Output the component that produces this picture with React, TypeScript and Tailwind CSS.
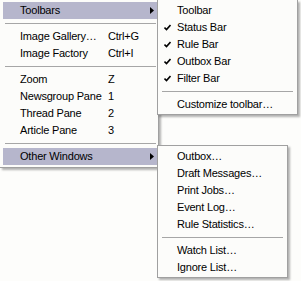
import React from 'react';

type Entry =
	| { kind: 'item'; label: string; shortcut?: string; checked?: boolean; submenu?: boolean; active?: boolean }
	| { kind: 'sep' };

const mainItems: Entry[] = [
	{ kind: 'item', label: 'Toolbars', submenu: true, active: true },
	{ kind: 'sep' },
	{ kind: 'item', label: 'Image Gallery…', shortcut: 'Ctrl+G' },
	{ kind: 'item', label: 'Image Factory', shortcut: 'Ctrl+I' },
	{ kind: 'sep' },
	{ kind: 'item', label: 'Zoom', shortcut: 'Z' },
	{ kind: 'item', label: 'Newsgroup Pane', shortcut: '1' },
	{ kind: 'item', label: 'Thread Pane', shortcut: '2' },
	{ kind: 'item', label: 'Article Pane', shortcut: '3' },
	{ kind: 'sep' },
	{ kind: 'item', label: 'Other Windows', submenu: true, active: true },
];

const toolbarItems: Entry[] = [
	{ kind: 'item', label: 'Toolbar' },
	{ kind: 'item', label: 'Status Bar', checked: true },
	{ kind: 'item', label: 'Rule Bar', checked: true },
	{ kind: 'item', label: 'Outbox Bar', checked: true },
	{ kind: 'item', label: 'Filter Bar', checked: true },
	{ kind: 'sep' },
	{ kind: 'item', label: 'Customize toolbar…' },
];

const windowItems: Entry[] = [
	{ kind: 'item', label: 'Outbox…' },
	{ kind: 'item', label: 'Draft Messages…' },
	{ kind: 'item', label: 'Print Jobs…' },
	{ kind: 'item', label: 'Event Log…' },
	{ kind: 'item', label: 'Rule Statistics…' },
	{ kind: 'sep' },
	{ kind: 'item', label: 'Watch List…' },
	{ kind: 'item', label: 'Ignore List…' },
];

function Check() {
	return (
		<svg width="7" height="7" viewBox="0 0 7 7" className="shrink-0">
			<path d="M0.5 3.5 L2.5 5.5 L6.5 1" fill="none" stroke="#000" strokeWidth="1.6" />
		</svg>
	);
}

function Arrow() {
	return (
		<svg width="4" height="7" viewBox="0 0 4 7" className="shrink-0">
			<path d="M0 0 L4 3.5 L0 7 Z" fill="#000" />
		</svg>
	);
}

function MenuList({ entries, labelWidth }: { entries: Entry[]; labelWidth?: string }) {
	return (
		<>
			{entries.map((e, i) =>
				e.kind === 'sep' ? (
					<div key={i} className="h-[9px] flex flex-col justify-center px-[2px]">
						<div className="h-px bg-[#a6a6a6]" />
					</div>
				) : (
					<div
						key={i}
						className={`h-[17px] flex items-center pl-[4px] pr-[4px] ${e.active ? 'bg-[#b6b6cc]' : ''}`}
					>
						<span className="w-[13px] shrink-0 flex items-center">{e.checked && <Check />}</span>
						<span className={labelWidth ? `${labelWidth} shrink-0` : ''}>{e.label}</span>
						{e.shortcut && <span>{e.shortcut}</span>}
						{e.submenu && (
							<span className="ml-auto flex items-center">
								<Arrow />
							</span>
						)}
					</div>
				)
			)}
		</>
	);
}

export default function App() {
	return (
		<div
			className="relative w-[301px] h-[281px] overflow-hidden bg-[#fdfdfb] text-[11px] leading-none tracking-[-0.2px] text-black"
			style={{ fontFamily: '"Liberation Sans", Arial, sans-serif' }}
		>
			{/* Main View menu */}
			<div className="absolute left-0 top-0 w-[159px] bg-[#fcfcfa] border-r border-b border-[#a0a0a0] pt-[2px] pb-[2px] pl-[3px] shadow-[2px_2px_2px_rgba(0,0,0,0.3)]">
				<MenuList entries={mainItems} labelWidth="w-[88px]" />
			</div>

			{/* Toolbars submenu */}
			<div className="absolute left-[157px] top-0 w-[141px] bg-[#fcfcfa] border-l border-r border-b border-[#a0a0a0] pt-[2px] pb-[1px] px-[2px] shadow-[2px_2px_2px_rgba(0,0,0,0.3)]">
				<MenuList entries={toolbarItems} />
			</div>

			{/* Other Windows submenu */}
			<div className="absolute left-[157px] top-[145px] w-[131px] bg-[#fcfcfa] border border-[#a0a0a0] pt-[2px] pb-[1px] px-[2px] shadow-[2px_2px_2px_rgba(0,0,0,0.3)]">
				<MenuList entries={windowItems} />
			</div>
		</div>
	);
}
